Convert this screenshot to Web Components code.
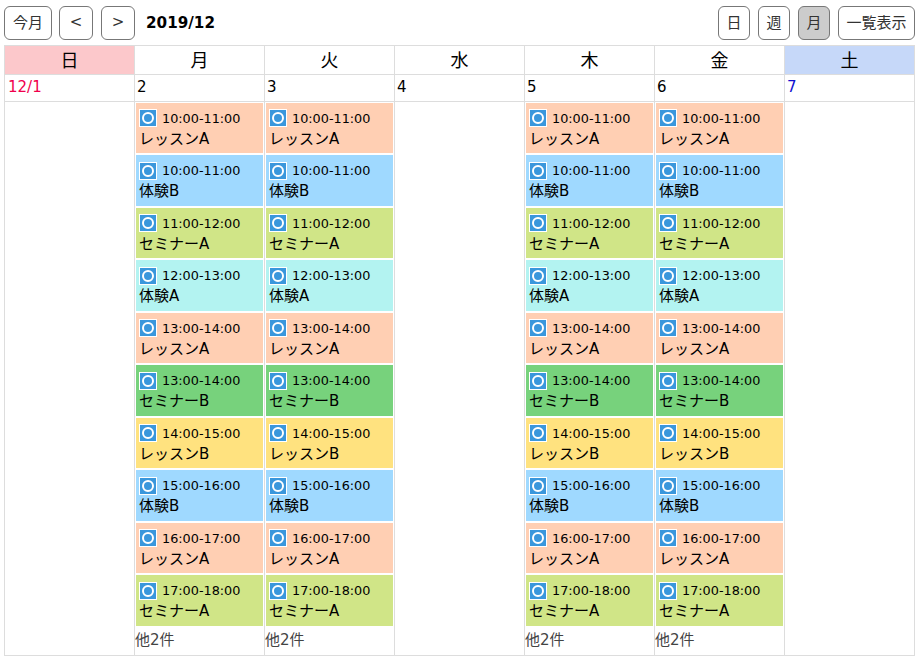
<!DOCTYPE html>
<html lang="ja">
<head>
<meta charset="utf-8">
<title>カレンダー</title>
<style>
  html, body { margin: 0; background: #fff; overflow: hidden; }
  body { font-family: "DejaVu Sans", "Noto Sans CJK JP", sans-serif; color: #000; }
</style>
</head>
<body>
<cal-app></cal-app>

<script>
// イベントの色
const COLORS = {
  'レッスンA': '#ffcfb3',
  'レッスンB': '#ffe27f',
  '体験A': '#b3f3f1',
  '体験B': '#9fd9ff',
  'セミナーA': '#d0e587',
  'セミナーB': '#77d27c'
};

const EVENTS = [
  ['10:00-11:00', 'レッスンA'],
  ['10:00-11:00', '体験B'],
  ['11:00-12:00', 'セミナーA'],
  ['12:00-13:00', '体験A'],
  ['13:00-14:00', 'レッスンA'],
  ['13:00-14:00', 'セミナーB'],
  ['14:00-15:00', 'レッスンB'],
  ['15:00-16:00', '体験B'],
  ['16:00-17:00', 'レッスンA'],
  ['17:00-18:00', 'セミナーA']
];

class CalButton extends HTMLElement {
  constructor() {
    super();
    this.attachShadow({mode: 'open'});
    this.shadowRoot.innerHTML = `
      <style>
        :host { display: block; }
        button {
          display: flex; align-items: center; justify-content: center;
          box-sizing: border-box; height: 34px; width: 100%; padding: 0 0 3px;
          font: 15px "DejaVu Sans", "Noto Sans CJK JP", sans-serif; color: #333;
          background: #fff; border: 1px solid #777; border-radius: 6px;
        }
        :host([active]) button { background: #ccc; }
      </style>
      <button><slot></slot></button>
    `;
  }
}
customElements.define('cal-button', CalButton);

class CalToolbar extends HTMLElement {
  constructor() {
    super();
    this.attachShadow({mode: 'open'});
    this.shadowRoot.innerHTML = `
      <style>
        :host { display: flex; align-items: center; height: 34px; padding: 6px 7px 5px 4px; }
        .group { display: flex; gap: 7px; align-items: center; }
        .group.right { gap: 8px; margin-left: auto; }
        .prev { width: 34px; margin-left: 0; }
        .today { width: 48px; }
        .next { width: 34px; margin-left: 1px; }
        .title { margin-left: 4px; font-weight: bold; font-size: 15.2px; }
        .small { width: 32px; }
        .list { width: 77px; }
      </style>
      <div class="group">
        <cal-button class="today">今月</cal-button>
        <cal-button class="prev">&lt;</cal-button>
        <cal-button class="next">&gt;</cal-button>
        <span class="title">2019/12</span>
      </div>
      <div class="group right">
        <cal-button class="small">日</cal-button>
        <cal-button class="small">週</cal-button>
        <cal-button class="small" active>月</cal-button>
        <cal-button class="list">一覧表示</cal-button>
      </div>
    `;
  }
}
customElements.define('cal-toolbar', CalToolbar);

class CalEvent extends HTMLElement {
  constructor() {
    super();
    this.attachShadow({mode: 'open'});
    this.shadowRoot.innerHTML = `
      <style>
        :host {
          display: block; box-sizing: border-box; height: 50.5px; padding: 5.2px 0 0 3px;
          background: var(--event-color, #eee); color: #000;
        }
        .time { display: flex; align-items: center; height: 20px; gap: 5px; font-size: 12.8px; }
        .mark {
          flex: none; box-sizing: border-box; width: 18px; height: 18px;
          background: #3a97dc; border: 1px solid #fff;
          display: flex; align-items: center; justify-content: center;
        }
        .mark i { display: block; box-sizing: border-box; width: 12px; height: 12px; border: 2.5px solid #fff; border-radius: 50%; }
        .name { font-size: 15px; line-height: 20px; margin-top: 0.8px; white-space: nowrap; }
      </style>
      <div class="time"><span class="mark"><i></i></span><slot name="time"></slot></div>
      <div class="name"><slot></slot></div>
    `;
  }
}
customElements.define('cal-event', CalEvent);

class CalDay extends HTMLElement {
  constructor() {
    super();
    this.attachShadow({mode: 'open'});
    this.shadowRoot.innerHTML = `
      <style>
        :host {
          display: flex; flex-direction: column; box-sizing: border-box; min-width: 0;
          padding: 0.9px 0 0 1px; border-right: 1px solid #ddd;
        }
        .list { display: flex; flex-direction: column; gap: 2px; padding-right: 1px; }
        .more { font-size: 15px; color: #444; margin: 4px 0 0 -1px; height: 20px; line-height: 20px; }
      </style>
      <div class="list"><slot></slot></div>
      <div class="more" part="more"></div>
    `;
  }
  connectedCallback() {
    const more = this.getAttribute('more');
    if (more) this.shadowRoot.querySelector('.more').textContent = more;
  }
}
customElements.define('cal-day', CalDay);

class CalGrid extends HTMLElement {
  constructor() {
    super();
    this.attachShadow({mode: 'open'});
    this.shadowRoot.innerHTML = `
      <style>
        :host {
          display: grid; grid-template-columns: repeat(7, 130px); grid-template-rows: 29px 27px 554px;
          width: 911px; margin-left: 4px; box-sizing: border-box;
          border-top: 1px solid #ddd; border-left: 1px solid #ddd; 
        }
        .head {
          display: flex; align-items: center; justify-content: center; font-size: 18px; padding-bottom: 3px;
          border-right: 1px solid #ddd; border-bottom: 1px solid #ddd; box-sizing: border-box;
        }
        .sun { background: #fcc8cb; color: #000; }
        .sat { background: #c6d8f9; }
        .date {
          font-size: 15px; padding: 3px 0 0 2px; box-sizing: border-box;
          border-right: 1px solid #ddd; border-bottom: 1px solid #ddd;
        }
        .date.r { color: #f0004c; padding-left: 3px; }
        .date.b { color: #1010d0; }
        ::slotted(cal-day) { border-bottom: 1px solid #ddd; }
      </style>
      <div class="head sun">日</div><div class="head">月</div><div class="head">火</div><div class="head">水</div>
      <div class="head">木</div><div class="head">金</div><div class="head sat">土</div>
      <div class="date r">12/1</div><div class="date">2</div><div class="date">3</div><div class="date">4</div>
      <div class="date">5</div><div class="date">6</div><div class="date b">7</div>
      <slot></slot>
    `;
  }
}
customElements.define('cal-grid', CalGrid);

class CalApp extends HTMLElement {
  constructor() {
    super();
    this.attachShadow({mode: 'open'});
    this.shadowRoot.innerHTML = `
      <style>:host { display: block; }</style>
      <cal-toolbar></cal-toolbar>
      <cal-grid></cal-grid>
    `;
    const grid = this.shadowRoot.querySelector('cal-grid');
    // 月火木金だけ予定あり
    [false, true, true, false, true, true, false].forEach(hasEvents => {
      const day = document.createElement('cal-day');
      if (hasEvents) {
        day.setAttribute('more', '他2件');
        EVENTS.forEach(([time, name]) => {
          const ev = document.createElement('cal-event');
          ev.style.setProperty('--event-color', COLORS[name]);
          const t = document.createElement('span');
          t.slot = 'time';
          t.textContent = time;
          ev.append(t, name);
          day.append(ev);
        });
      }
      grid.append(day);
    });
  }
}
customElements.define('cal-app', CalApp);
</script>
</body>
</html>
